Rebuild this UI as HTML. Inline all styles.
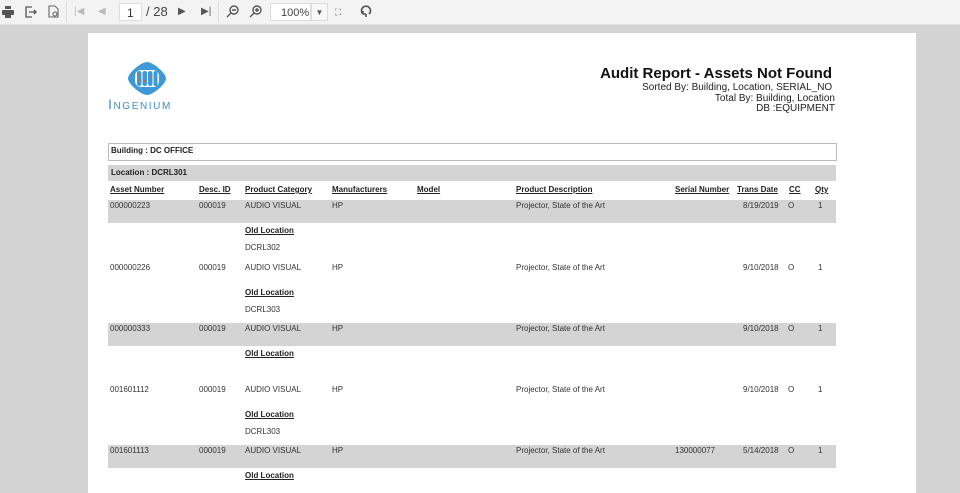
<!DOCTYPE html>
<html><head><meta charset="utf-8"><style>
*{margin:0;padding:0;box-sizing:border-box}
body{width:960px;height:485px;overflow:hidden;background:#d3d3d3;font-family:"Liberation Sans",Arial,sans-serif;position:relative}
#tb{position:absolute;left:0;top:0;width:960px;height:25px;background:#f3f3f3;border-bottom:1px solid #e0e0e0}
.ic{position:absolute;top:5px;color:#555;font-size:13px;line-height:14px}
#page{position:absolute;left:88px;top:33px;width:828px;height:460px;background:#fff}
.t{position:absolute;font-size:8px;color:#333;white-space:nowrap;line-height:10px}
.h{font-weight:bold;text-decoration:underline;color:#222}
.g{position:absolute;left:20px;width:728px;height:23px;background:#d4d4d4}
</style></head><body>
<div id="tb">
<svg class="ic" style="left:2px;top:6px" width="12" height="12" viewBox="0 0 12 12"><rect x="3" y="0" width="6" height="3" fill="#555"/><rect x="0" y="4" width="12" height="5" rx="1" fill="#555"/><rect x="3" y="8" width="6" height="4" fill="#555"/></svg>
<svg class="ic" style="left:25px;top:6px" width="12" height="12" viewBox="0 0 12 12" fill="none" stroke="#555" stroke-width="1.3"><path d="M7 1H1v10h6M4 6h7M9 4l2 2-2 2"/></svg>
<svg class="ic" style="left:48px;top:5px" width="11" height="13" viewBox="0 0 11 13" fill="none" stroke="#666" stroke-width="1.1"><path d="M1 1h6l3 3v8H1z"/><circle cx="7" cy="9" r="2"/></svg>
<div style="position:absolute;left:66px;top:2px;width:1px;height:20px;background:#ddd"></div>
<span class="ic" style="left:74px;color:#bbb;font-size:10px">|◀</span>
<span class="ic" style="left:98px;color:#bbb;font-size:10px">◀</span>
<div style="position:absolute;left:119px;top:3px;width:23px;height:18px;background:#fff;border:1px solid #ddd;font-size:12px;color:#333;padding:2px 0 0 7px">1</div>
<span class="ic" style="left:146px;top:5px;font-size:13px;color:#444">/ 28</span>
<span class="ic" style="left:178px;font-size:10px;color:#555">▶</span>
<span class="ic" style="left:201px;font-size:10px;color:#555">▶|</span>
<div style="position:absolute;left:218px;top:2px;width:1px;height:20px;background:#ddd"></div>
<svg class="ic" style="left:226px;top:5px" width="13" height="13" viewBox="0 0 13 13" fill="none" stroke="#555" stroke-width="1.4"><circle cx="8" cy="5" r="4"/><path d="M5 8l-4 4M6 5h4"/></svg>
<svg class="ic" style="left:249px;top:5px" width="13" height="13" viewBox="0 0 13 13" fill="none" stroke="#555" stroke-width="1.4"><circle cx="8" cy="5" r="4"/><path d="M5 8l-4 4M6 5h4M8 3v4"/></svg>
<div style="position:absolute;left:270px;top:3px;width:41px;height:18px;background:#fff;border:1px solid #ddd;font-size:11px;color:#444;padding:3px 0 0 10px">100%</div>
<div style="position:absolute;left:311px;top:3px;width:17px;height:18px;background:#f8f8f8;border:1px solid #ddd;font-size:8px;color:#555;text-align:center;padding-top:4px">▼</div>
<span class="ic" style="left:335px;font-size:9px;color:#666">⛶</span>
<svg class="ic" style="left:360px;top:5px" width="12" height="13" viewBox="0 0 12 13" fill="none" stroke="#555" stroke-width="1.6"><path d="M9 9A4.5 4.5 0 1 0 3 9M3 9v-3M3 9h3M6 9v3"/></svg>
<div style="position:absolute;left:380px;top:0;width:580px;height:24px;background:#f3f3f3"></div>
</div>
<div id="page">
<svg style="position:absolute;left:39px;top:28px" width="40" height="35" viewBox="0 0 40 35"><path d="M20 1C26 1 39 12 39 17.5S26 34 20 34 1 23 1 17.5 14 1 20 1z" fill="#3d9ad6"/><rect x="8" y="9" width="24" height="17" rx="6" fill="#fff"/><rect x="10" y="10" width="4.5" height="15" rx="2.2" fill="#3d9ad6"/><rect x="15.5" y="10" width="4.5" height="15" rx="2.2" fill="#3d9ad6"/><rect x="21" y="10" width="4.5" height="15" rx="2.2" fill="#3d9ad6"/><rect x="26.5" y="10" width="4" height="15" rx="2" fill="#3d9ad6"/><circle cx="12" cy="14" r="1" fill="#e06030"/><circle cx="12" cy="19" r="1" fill="#e06030"/><circle cx="17.5" cy="20" r="1" fill="#e06030"/><circle cx="23" cy="16" r="1" fill="#e06030"/></svg>
<div style="position:absolute;left:20px;top:63px;font-size:14px;letter-spacing:1.6px;color:#3d8fc8;font-variant:small-caps">Ingenium</div>
<div style="position:absolute;right:84px;top:32px;font-size:15px;font-weight:bold;color:#111">Audit Report - Assets Not Found</div>
<div style="position:absolute;right:81px;top:50px;font-size:10px;color:#222;text-align:right;line-height:10.5px">Sorted By: Building, Location, SERIAL_NO&nbsp;<br>Total By: Building, Location<br>DB :EQUIPMENT</div>
<div style="position:absolute;left:20px;top:110px;width:729px;height:18px;border:1px solid #bbb"></div>
<div class="t" style="left:23px;top:113px;font-weight:bold;color:#222">Building : DC OFFICE</div>
<div style="position:absolute;left:20px;top:132px;width:728px;height:16px;background:#d4d4d4"></div>
<div class="t" style="left:23px;top:135px;font-weight:bold;color:#222">Location : DCRL301</div>
<div class="t h" style="left:22px;top:152px">Asset Number</div>
<div class="t h" style="left:111px;top:152px">Desc. ID</div>
<div class="t h" style="left:157px;top:152px">Product Category</div>
<div class="t h" style="left:244px;top:152px">Manufacturers</div>
<div class="t h" style="left:329px;top:152px">Model</div>
<div class="t h" style="left:428px;top:152px">Product Description</div>
<div class="t h" style="left:587px;top:152px">Serial Number</div>
<div class="t h" style="left:649px;top:152px">Trans Date</div>
<div class="t h" style="left:701px;top:152px">CC</div>
<div class="t h" style="left:727px;top:152px">Qty</div>
<div class="g" style="top:167px"></div>
<div class="g" style="top:290px"></div>
<div class="g" style="top:412px"></div>
<div class="t" style="left:22px;top:168px">000000223</div><div class="t" style="left:111px;top:168px">000019</div><div class="t" style="left:157px;top:168px">AUDIO VISUAL</div><div class="t" style="left:244px;top:168px">HP</div><div class="t" style="left:428px;top:168px">Projector, State of the Art</div><div class="t" style="left:655px;top:168px">8/19/2019</div><div class="t" style="left:700px;top:168px">O</div><div class="t" style="left:730px;top:168px">1</div>
<div class="t h" style="left:157px;top:193px">Old Location</div><div class="t" style="left:157px;top:210px">DCRL302</div>
<div class="t" style="left:22px;top:230px">000000226</div><div class="t" style="left:111px;top:230px">000019</div><div class="t" style="left:157px;top:230px">AUDIO VISUAL</div><div class="t" style="left:244px;top:230px">HP</div><div class="t" style="left:428px;top:230px">Projector, State of the Art</div><div class="t" style="left:655px;top:230px">9/10/2018</div><div class="t" style="left:700px;top:230px">O</div><div class="t" style="left:730px;top:230px">1</div>
<div class="t h" style="left:157px;top:255px">Old Location</div><div class="t" style="left:157px;top:272px">DCRL303</div>
<div class="t" style="left:22px;top:291px">000000333</div><div class="t" style="left:111px;top:291px">000019</div><div class="t" style="left:157px;top:291px">AUDIO VISUAL</div><div class="t" style="left:244px;top:291px">HP</div><div class="t" style="left:428px;top:291px">Projector, State of the Art</div><div class="t" style="left:655px;top:291px">9/10/2018</div><div class="t" style="left:700px;top:291px">O</div><div class="t" style="left:730px;top:291px">1</div>
<div class="t h" style="left:157px;top:316px">Old Location</div>
<div class="t" style="left:22px;top:352px">001601112</div><div class="t" style="left:111px;top:352px">000019</div><div class="t" style="left:157px;top:352px">AUDIO VISUAL</div><div class="t" style="left:244px;top:352px">HP</div><div class="t" style="left:428px;top:352px">Projector, State of the Art</div><div class="t" style="left:655px;top:352px">9/10/2018</div><div class="t" style="left:700px;top:352px">O</div><div class="t" style="left:730px;top:352px">1</div>
<div class="t h" style="left:157px;top:377px">Old Location</div><div class="t" style="left:157px;top:394px">DCRL303</div>
<div class="t" style="left:22px;top:413px">001601113</div><div class="t" style="left:111px;top:413px">000019</div><div class="t" style="left:157px;top:413px">AUDIO VISUAL</div><div class="t" style="left:244px;top:413px">HP</div><div class="t" style="left:428px;top:413px">Projector, State of the Art</div><div class="t" style="left:587px;top:413px">130000077</div><div class="t" style="left:655px;top:413px">5/14/2018</div><div class="t" style="left:700px;top:413px">O</div><div class="t" style="left:730px;top:413px">1</div>
<div class="t h" style="left:157px;top:438px">Old Location</div>
</div>
</body></html>
